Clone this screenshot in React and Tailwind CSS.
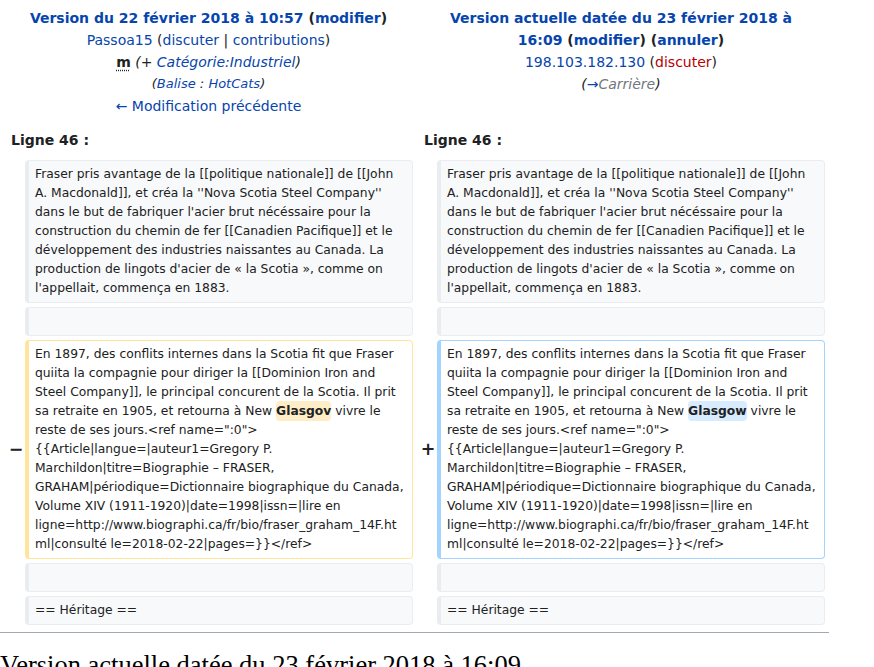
import React from "react";

const L = ({ children, className = "" }) => (
  <span className={"text-[#0645ad] " + className}>{children}</span>
);

const Box = ({ kind = "context", children }) => {
  const cls =
    kind === "del"
      ? "bg-white border-[#ffe49c]"
      : kind === "add"
      ? "bg-white border-[#a3d3ff]"
      : "bg-[#f8f9fa] border-[#eaecf0]";
  return (
    <div
      className={
        "border border-solid border-l-4 rounded-[4px] px-[6px] py-[4px] text-[12.32px] leading-[19px] text-[#202122] whitespace-pre-wrap break-words " +
        cls
      }
    >
      {children}
    </div>
  );
};

const Marker = ({ sign }) => (
  <div className="flex items-center justify-end">
    {sign ? (
      <span className="font-bold text-[17.5px] leading-[21px] text-[#202122] mr-[-2.5px]">
        {sign}
      </span>
    ) : null}
  </div>
);

const para1 =
  "Fraser pris avantage de la [[politique nationale]] de [[John A. Macdonald]], et créa la ''Nova Scotia Steel Company'' dans le but de fabriquer l'acier brut nécéssaire pour la construction du chemin de fer [[Canadien Pacifique]] et le développement des industries naissantes au Canada. La production de lingots d'acier de « la Scotia », comme on l'appellait, commença en 1883.";

const pre =
  "En 1897, des conflits internes dans la Scotia fit que Fraser quiita la compagnie pour diriger la [[Dominion Iron and Steel Company]], le principal concurent de la Scotia. Il prit sa retraite en 1905, et retourna à New ";
const post =
  " vivre le reste de ses jours.<ref name=\":0\">{{Article|langue=|auteur1=Gregory P. Marchildon|titre=Biographie – FRASER, GRAHAM|périodique=Dictionnaire biographique du Canada, Volume XIV (1911-1920)|date=1998|issn=|lire en ligne=http://www.biographi.ca/fr/bio/fraser_graham_14F.html|consulté le=2018-02-22|pages=}}</ref>";

export default function App() {
  return (
    <div className="bg-white h-[667px] overflow-hidden text-[14px] text-[#202122] font-['DejaVu_Sans',sans-serif]">
      <div className="grid grid-cols-[17px_388px_16px_388px] gap-[4px] p-[4px] w-[829px]">
        {/* Header row */}
        <div className="col-span-2 text-center px-[9px] pt-[3px] pb-[4px] leading-[22px]">
          <div className="font-bold">
            <L>Version du 22 février 2018 à 10:57</L> (<L>modifier</L>)
          </div>
          <div>
            <L>Passoa15</L> (<L>discuter</L> | <L>contributions</L>)
          </div>
          <div>
            <span className="font-bold underline decoration-dotted underline-offset-[3px]">m</span>{" "}
            <span className="italic">
              (+ <L>Catégorie:Industriel</L>)
            </span>
          </div>
          <div className="italic text-[13px]">
            (<L>Balise</L> : <L>HotCats</L>)
          </div>
          <div>
            <L>← Modification précédente</L>
          </div>
        </div>
        <div className="col-span-2 text-center px-[9px] pt-[3px] pb-[4px] leading-[22px]">
          <div className="font-bold">
            <L>Version actuelle datée du 23 février 2018 à 16:09</L> (<L>modifier</L>) (<L>annuler</L>)
          </div>
          <div>
            <L>198.103.182.130</L> (<span className="text-[#ba0000]">discuter</span>)
          </div>
          <div className="italic">
            (<L>→</L>
            <span className="text-[#72777d]">Carrière</span>)
          </div>
        </div>

        {/* Line numbers */}
        <div className="col-span-2 font-bold px-[7px] pt-[4px] pb-[5px] leading-[22px]">Ligne 46 :</div>
        <div className="col-span-2 font-bold px-[7px] pt-[4px] pb-[5px] leading-[22px]">Ligne 46 :</div>

        {/* Context 1 */}
        <Marker />
        <Box>{para1}</Box>
        <Marker />
        <Box>{para1}</Box>

        {/* Empty context */}
        <Marker />
        <Box>{"\u00a0"}</Box>
        <Marker />
        <Box>{"\u00a0"}</Box>

        {/* Changed */}
        <Marker sign="−" />
        <Box kind="del">
          {pre}
          <span className="font-bold bg-[#feeec8] rounded-[4px] py-[3px]">Glasgov</span>
          {post}
        </Box>
        <Marker sign="+" />
        <Box kind="add">
          {pre}
          <span className="font-bold bg-[#d8ecff] rounded-[4px] py-[3px]">Glasgow</span>
          {post}
        </Box>

        {/* Empty context */}
        <Marker />
        <Box>{"\u00a0"}</Box>
        <Marker />
        <Box>{"\u00a0"}</Box>

        {/* Heritage */}
        <Marker />
        <Box>== Héritage ==</Box>
        <Marker />
        <Box>== Héritage ==</Box>
      </div>
      <div className="w-[829px] h-px bg-[#a2a9b1] mt-[3px]"></div>
      <h2 className="mt-[19px] font-['Liberation_Serif',serif] text-[26.5px] leading-[26.5px] text-black font-normal whitespace-nowrap">
        Version actuelle datée du 23 février 2018 à 16:09
      </h2>
    </div>
  );
}
